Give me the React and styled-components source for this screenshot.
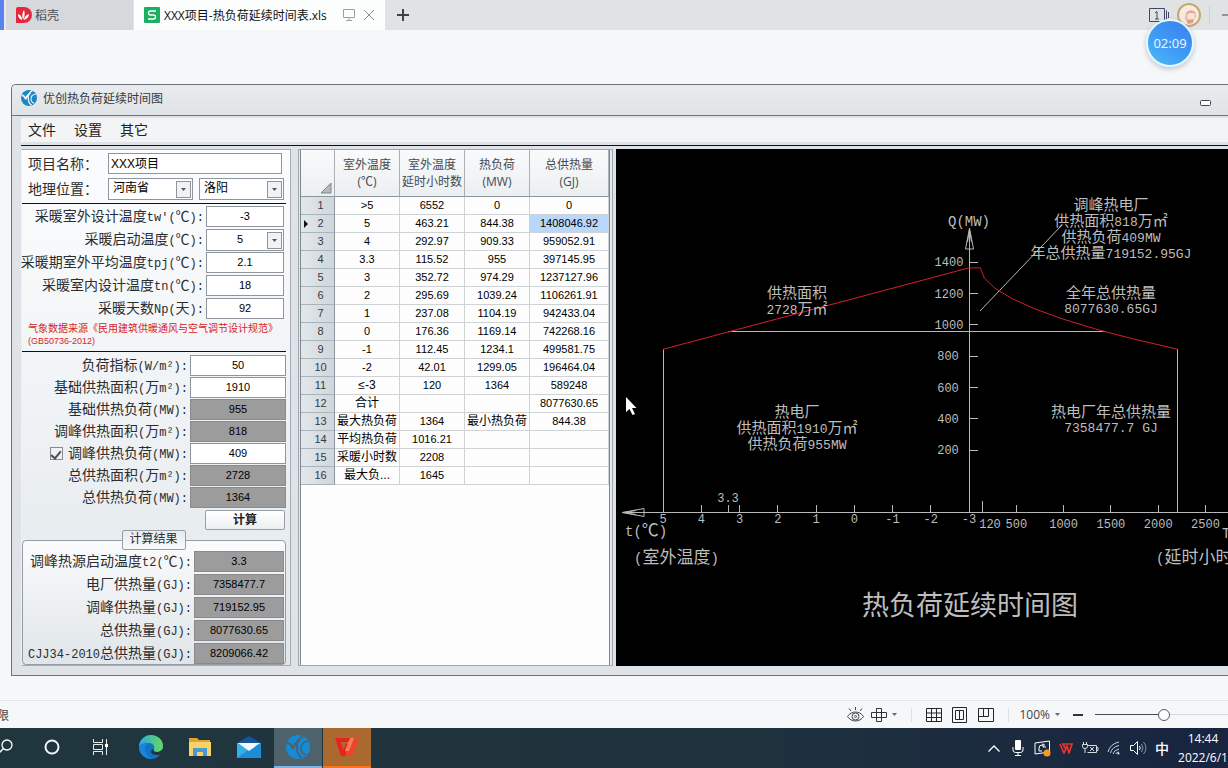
import React, { useEffect, useRef } from "react";
import styled, { createGlobalStyle } from "styled-components";

const GlobalStyle = createGlobalStyle`
  * {
    box-sizing: border-box;
  }
  body {
    margin: 0;
    background-color: #f5f7f9;
    font-family: "Open Sans", "Noto Sans CJK SC", sans-serif;
    font-size: 12px;
    color: #333;
  }
  button, input, select {
    font-family: inherit;
    margin: 0;
  }
`;

const Page = styled.div`
  position: relative;
  min-height: 100vh;
  display: flex;
  flex-direction: column;
  overflow: hidden;
`;

/* top tabs */
const TabBar = styled.header`
  display: flex;
  align-items: stretch;
  height: 30px;
  background-color: #dfe3e4;
`;
const Edge = styled.div`
  width: 6px;
  border-left: 4px solid #5b82ee;
  background-color: #e6e9ee;
`;
const Tab = styled.button`
  display: flex;
  align-items: center;
  gap: ${(p) => (p.$active ? "4px" : "3px")};
  width: ${(p) => (p.$active ? "251px" : "127px")};
  padding: 0 10px;
  margin-right: ${(p) => (p.$active ? "0" : "1px")};
  border: 0;
  background-color: ${(p) => (p.$active ? "#fcfdfd" : "#d6d8dc")};
  color: ${(p) => (p.$active ? "#111" : "#4a5058")};
  font-size: 12px;
  white-space: nowrap;
`;
const TabTools = styled.span`
  display: flex;
  gap: 8px;
  margin-left: auto;
`;
const NewTab = styled.button`
  width: 36px;
  display: grid;
  place-items: center;
  border: 0;
  background: none;
`;
const TabRight = styled.div`
  display: flex;
  align-items: center;
  gap: 7px;
  margin-left: auto;
`;
const Separator = styled.span`
  width: 1px;
  height: 18px;
  background-color: #cbd0d3;
`;
const Timer = styled.div`
  position: absolute;
  top: 19px;
  right: 34px;
  width: 48px;
  height: 48px;
  display: grid;
  place-items: center;
  border: 2px solid #e0f8fc;
  border-radius: 50%;
  background: linear-gradient(215deg, #3b7ff0, #3f9bf3 55%, #4cbcf8);
  box-shadow: 0 2px 5px rgba(60, 80, 110, 0.3);
  color: #e6f4ff;
  font-family: "Noto Sans", sans-serif;
  font-size: 13px;
`;

/* application window */
const Workspace = styled.main`
  flex: 1;
  padding: 54px 0 24px 11px;
`;
const Window = styled.section`
  border: 1px solid #6c737a;
  border-right: 0;
  border-top-left-radius: 5px;
  background-color: #dfe3e7;
  overflow: hidden;
`;
const TitleBar = styled.div`
  display: flex;
  align-items: center;
  gap: 6px;
  height: 31px;
  padding: 0 17px 4px 9px;
  border-bottom: 1px solid #6c737a;
  background: linear-gradient(#e9ecef, #dfe3e6);
  color: #333a42;
`;
const Minimize = styled.button`
  display: flex;
  padding: 0;
  margin: 10px 0 0 auto;
  border: 0;
  background: none;
`;
const MenuBar = styled.nav`
  display: flex;
  align-items: center;
  gap: 18px;
  height: 24px;
  margin: 2px 0 3px 9px;
  padding-left: 7px;
  background-color: #f3f4f5;
`;
const MenuItem = styled.button`
  padding: 0;
  border: 0;
  background: none;
  color: #222;
  font-size: 14px;
  line-height: 20px;
`;
const Body = styled.div`
  display: grid;
  grid-template-columns: 270px 315px minmax(0, 1fr);
  column-gap: 7px;
  margin-left: 9px;
  padding: 3px 0 9px;
  border-top: 1px solid #111;

  & > :last-child {
    margin-left: -4px;
  }
`;

/* input panel */
const Panel = styled.form`
  border: 1px solid #a4abb3;
  border-left-color: #eef1f3;
  padding: 3px 4px 0 0;
  background: linear-gradient(#fbfcfd, #f1f4f6 45%, #e0e6ea);
  color: #2a2d31;
`;
const ProjectRow = styled.div`
  display: flex;
  align-items: center;
  gap: 6px;
  margin-bottom: ${(p) => p.$bottom}px;
  padding-left: 6px;
`;
const ProjectLabel = styled.label`
  flex: none;
  width: 74px;
  font-size: 14px;
  line-height: 20px;
  white-space: nowrap;
`;
const Rule = styled.hr`
  height: 1px;
  margin: 0;
  border: 0;
  background-color: #111;
`;
const Group = styled.div`
  display: flex;
  flex-direction: column;
  gap: ${(p) => p.$gap}px;
  padding: ${(p) => p.$pad};
`;
const Field = styled.div`
  display: flex;
  align-items: center;
  justify-content: flex-end;
  height: 21px;
`;
const FieldLabel = styled.label`
  padding-right: 2px;
  font-size: 14px;
  line-height: 20px;
  white-space: nowrap;
`;
const Half = styled.span`
  font-family: "Liberation Mono", monospace;
  font-size: 12px;
`;
const TextBox = styled.input`
  flex: none;
  width: ${(p) => p.$width}px;
  height: 21px;
  padding: 0 2px 2px;
  border: 1px solid #8f959c;
  border-color: ${(p) => (p.readOnly ? "#8a8a8c" : "#8f959c")};
  background-color: ${(p) => (p.readOnly ? "#9c9c9c" : "#fff")};
  color: #000;
  font-family: "Liberation Sans", "Noto Sans CJK SC", sans-serif;
  font-size: ${(p) => (p.$left ? "12px" : "11px")};
  text-align: ${(p) => (p.$left ? "left" : "center")};
  outline: none;
`;
const SelectWrap = styled.span`
  position: relative;
  flex: none;
  width: ${(p) => p.$width}px;
  height: 22px;
`;
const SelectBox = styled.select`
  appearance: none;
  width: 100%;
  height: 100%;
  padding: 0 14px 2px 4px;
  border: 1px solid #8f959c;
  border-radius: 0;
  background-color: #fff;
  color: #000;
  font-family: "Liberation Sans", "Noto Sans CJK SC", sans-serif;
  font-size: ${(p) => (p.$center ? "11px" : "12px")};
  text-align: ${(p) => (p.$center ? "center" : "left")};
`;
const Arrow = styled.span`
  position: absolute;
  top: 3px;
  right: 2px;
  width: 15px;
  height: 17px;
  display: grid;
  place-items: center;
  border: 1px solid #8f959c;
  background-color: #f0f2f4;
  pointer-events: none;
`;
const Note = styled.p`
  margin: 0;
  padding: 4px 0 4px 6px;
  color: #d9222a;
  font-family: "Liberation Sans", "Noto Sans CJK SC", sans-serif;
  font-size: 10px;
  line-height: 12px;
  white-space: nowrap;
`;
const NoteCode = styled.span`
  display: block;
  font-size: 9px;
`;
const CheckBox = styled.input`
  appearance: none;
  display: grid;
  place-items: center;
  width: 13px;
  height: 13px;
  margin-right: 5px;
  border: 1px solid #868c94;
  background-color: #eef0f2;

  &:checked::after {
    content: "";
    width: 4px;
    height: 8px;
    border: solid #4a4e55;
    border-width: 0 2px 2px 0;
    transform: rotate(40deg);
  }
`;
const CalcButton = styled.button`
  display: block;
  width: 80px;
  height: 20px;
  margin: 2px 1px 0 auto;
  padding: 0;
  border: 1px solid #989fa7;
  border-radius: 2px;
  background: linear-gradient(#fff, #eceff1);
  color: #222;
  font-size: 12px;
  font-weight: bold;
  line-height: 16px;
`;
const Results = styled.fieldset`
  min-width: 0;
  margin: 0;
  padding: 1px 1px 0 0;
  border: 1px solid #959ca5;
  border-radius: 4px;
  background: linear-gradient(#fafbfc, #dfe5e9);
`;
const ResultsTitle = styled.legend`
  width: 64px;
  height: 20px;
  margin: 0 auto;
  padding: 0;
  border: 1px solid #959ca5;
  border-radius: 2px;
  background: linear-gradient(#e8ecef, #f7f9fa);
  font-size: 12px;
  line-height: 15px;
  text-align: center;
`;

/* table */
const SheetPanel = styled.div`
  padding: 0 2px 0 1px;
  border: 1px solid #a0a7b0;
  background-color: #e6e9ed;
`;
const SheetInner = styled.div`
  height: 100%;
  border: solid #7e8890;
  border-width: 0 1px;
  background-color: #fdfdfd;
`;
const Sheet = styled.table`
  width: 100%;
  table-layout: fixed;
  border-collapse: separate;
  border-spacing: 0;
  text-align: center;
`;
const Column = styled.col`
  width: ${(p) => p.$width};
`;
const HeadCell = styled.th`
  height: 47px;
  padding: 0;
  border-right: 1px solid #a9b0b7;
  border-bottom: 1px solid #8d949b;
  background: linear-gradient(#f9fafb, #eceff1);
  color: #444b52;
  font-weight: normal;
  font-size: 12px;
  line-height: 17px;
  white-space: pre;
  vertical-align: middle;
`;
const CornerCell = styled(HeadCell)`
  vertical-align: bottom;
  text-align: right;
  line-height: 0;
  padding: 0 2px 2px 0;
`;
const RowHead = styled.th`
  position: relative;
  height: 18px;
  padding: 0 0 0 6px;
  border-right: 1px solid #8d949b;
  border-bottom: 1px solid #a9b3ba;
  background: linear-gradient(90deg, #e2e7ea, #cfd7dc);
  color: #333a42;
  font-family: "Liberation Sans", sans-serif;
  font-size: 11px;
  font-weight: normal;
  line-height: 15px;
`;
const Marker = styled.svg`
  position: absolute;
  top: 5px;
  left: 3px;
`;
const Cell = styled.td`
  height: 18px;
  padding: 0;
  border-right: 1px solid #d0d3d6;
  border-bottom: 1px solid #d0d3d6;
  background-color: ${(p) => (p.$selected ? "#b9d6fb" : "transparent")};
  color: #000;
  font-family: "Liberation Sans", "Noto Sans CJK SC", sans-serif;
  font-size: ${(p) => (p.$wide ? "12px" : "11px")};
  line-height: 15px;
  white-space: nowrap;
`;

/* chart */
const Chart = styled.svg`
  display: block;
  width: calc(100% + 4px);
  height: 517px;
  background-color: #000;
  fill: #bdbdbd;
  font-family: "Noto Sans CJK SC", sans-serif;
`;
const ChartHalf = styled.tspan`
  font-family: "Liberation Mono", monospace;
  font-size: ${(p) => p.$size}px;
`;

/* bottom bars */
const StatusBar = styled.footer`
  display: flex;
  align-items: center;
  height: 28px;
  border-top: 1px solid #e1e4e8;
  background-color: #f6f7f9;
  color: #3d434b;
  overflow: hidden;
`;
const Clipped = styled.span`
  margin-left: -3px;
`;
const StatusTools = styled.div`
  display: flex;
  flex: none;
  align-items: center;
  margin-left: auto;
  margin-right: -5px;
`;
const StatusButton = styled.button`
  display: flex;
  align-items: center;
  gap: 5px;
  margin-right: ${(p) => p.$after}px;
  padding: 0;
  border: 0;
  background: none;
  color: inherit;
  font-size: 12px;
`;
const StatusLine = styled.span`
  width: 1px;
  height: 14px;
  margin-right: ${(p) => p.$after}px;
  background-color: #dcdfe3;
`;
const Zoom = styled.input`
  appearance: none;
  width: 138px;
  height: 14px;
  background: linear-gradient(90deg, #454b52 50%, #d5d8dc 50%) center / 100% 1px no-repeat;

  &::-webkit-slider-thumb {
    appearance: none;
    width: 12px;
    height: 12px;
    border: 1px solid #555b62;
    border-radius: 50%;
    background-color: #fff;
  }
`;
const TaskBar = styled.div`
  display: flex;
  height: 40px;
  background: linear-gradient(90deg, #20363d, #1f323d 60%, #182440);
  color: #fff;
`;
const TaskButton = styled.button`
  display: grid;
  place-items: center;
  width: ${(p) => p.$width || 48}px;
  margin-right: ${(p) => p.$after ?? 1}px;
  padding: 0;
  border: 0;
  border-bottom: 2px solid ${(p) => p.$line || "transparent"};
  background-color: ${(p) => p.$fill || "transparent"};
  color: #fff;
  overflow: hidden;
`;
const Tray = styled.div`
  display: flex;
  align-items: center;
  margin-left: auto;
`;
const TrayButton = styled.button`
  display: grid;
  place-items: center;
  width: 24px;
  height: 40px;
  padding: 0;
  border: 0;
  background: none;
  color: #fff;
  font-size: 14px;
  font-weight: 500;
`;
const Clock = styled.div`
  width: 54px;
  padding-left: 4px;
  font-size: 12px;
  line-height: 19px;
  text-align: center;
  white-space: nowrap;
`;

const HALF = /([\x20-\x7e²]+)/;

/* full-width and half-width runs are set in different faces */
const Mixed = ({ text }) =>
  text.split(HALF).map((part, i) => (i % 2 ? <Half key={i}>{part}</Half> : part));

const climate = [
  { id: "tw", label: "采暖室外设计温度tw'(℃):", value: "-3" },
  { id: "start", label: "采暖启动温度(℃):", value: "5", select: true },
  { id: "tpj", label: "采暖期室外平均温度tpj(℃):", value: "2.1" },
  { id: "tn", label: "采暖室内设计温度tn(℃):", value: "18" },
  { id: "np", label: "采暖天数Np(天):", value: "92" },
];

const loads = [
  { id: "index", label: "负荷指标(W/m²):", value: "50" },
  { id: "baseArea", label: "基础供热面积(万m²):", value: "1910" },
  { id: "baseLoad", label: "基础供热负荷(MW):", value: "955", locked: true },
  { id: "peakArea", label: "调峰供热面积(万m²):", value: "818", locked: true },
  { id: "peakLoad", label: "调峰供热负荷(MW):", value: "409", check: true },
  { id: "totalArea", label: "总供热面积(万m²):", value: "2728", locked: true },
  { id: "totalLoad", label: "总供热负荷(MW):", value: "1364", locked: true },
];

const results = [
  { id: "t2", label: "调峰热源启动温度t2(℃):", value: "3.3" },
  { id: "plant", label: "电厂供热量(GJ):", value: "7358477.7" },
  { id: "peak", label: "调峰供热量(GJ):", value: "719152.95" },
  { id: "total", label: "总供热量(GJ):", value: "8077630.65" },
  { id: "cjj", label: "CJJ34-2010总供热量(GJ):", value: "8209066.42" },
];

const rows = [
  [">5", "6552", "0", "0"],
  ["5", "463.21", "844.38", "1408046.92"],
  ["4", "292.97", "909.33", "959052.91"],
  ["3.3", "115.52", "955", "397145.95"],
  ["3", "352.72", "974.29", "1237127.96"],
  ["2", "295.69", "1039.24", "1106261.91"],
  ["1", "237.08", "1104.19", "942433.04"],
  ["0", "176.36", "1169.14", "742268.16"],
  ["-1", "112.45", "1234.1", "499581.75"],
  ["-2", "42.01", "1299.05", "196464.04"],
  ["≤-3", "120", "1364", "589248"],
  ["合计", "", "", "8077630.65"],
  ["最大热负荷", "1364", "最小热负荷", "844.38"],
  ["平均热负荷", "1016.21", "", ""],
  ["采暖小时数", "2208", "", ""],
  ["最大负...", "1645", "", ""],
];

const ArrowDown = () => (
  <Arrow>
    <svg width="5" height="3">
      <path d="M0 0h5L2.500 3z" fill="#555" />
    </svg>
  </Arrow>
);

const AppLogo = ({ size, color, mark }) => (
  <svg width={size} height={size} viewBox="0 0 24 24">
    <circle cx="12" cy="12" r="12" fill={color} />
    <path d="M1 8c3 0 5 2 6 6 1-4 3-7 7-9" fill="none" stroke={mark} strokeWidth="2.400" />
    <path d="M17 1c-5 3-7 7-6 12 0 4 2 8 5 10" fill="none" stroke={mark} strokeWidth="2" />
    <path d="M22 6c-5 1-7 4-7 7 0 4 2 6 5 7" fill="none" stroke={mark} strokeWidth="1.600" />
  </svg>
);

const Inputs = () => {
  const first = useRef(null);

  useEffect(() => {
    first.current.focus();
    first.current.setSelectionRange(2, 2);
  }, []);

  return (
    <Panel onSubmit={(e) => e.preventDefault()}>
      <ProjectRow $bottom={4}>
        <ProjectLabel htmlFor="project">项目名称：</ProjectLabel>
        <TextBox id="project" $width={174} $left defaultValue="XXX项目" />
      </ProjectRow>
      <ProjectRow $bottom={3}>
        <ProjectLabel htmlFor="province">地理位置：</ProjectLabel>
        <SelectWrap $width={85}>
          <SelectBox id="province" defaultValue="河南省">
            <option>河南省</option>
          </SelectBox>
          <ArrowDown />
        </SelectWrap>
        <SelectWrap $width={85}>
          <SelectBox aria-label="城市" defaultValue="洛阳">
            <option>洛阳</option>
          </SelectBox>
          <ArrowDown />
        </SelectWrap>
      </ProjectRow>
      <Rule />
      <Group $gap={2} $pad="2px 2px 0 0">
        {climate.map((f) => (
          <Field key={f.id}>
            <FieldLabel htmlFor={f.id}>
              <Mixed text={f.label} />
            </FieldLabel>
            {f.select ? (
              <SelectWrap $width={78}>
                <SelectBox id={f.id} $center defaultValue={f.value}>
                  <option>{f.value}</option>
                </SelectBox>
                <ArrowDown />
              </SelectWrap>
            ) : (
              <TextBox id={f.id} ref={f.id === "tw" ? first : null} $width={78} defaultValue={f.value} />
            )}
          </Field>
        ))}
      </Group>
      <Note>
        气象数据来源《民用建筑供暖通风与空气调节设计规范》
        <NoteCode>(GB50736-2012)</NoteCode>
      </Note>
      <Rule />
      <Group $gap={1} $pad="3px 0 0">
        {loads.map((f) => (
          <Field key={f.id}>
            {f.check && <CheckBox type="checkbox" defaultChecked aria-label="调峰供热负荷" />}
            <FieldLabel htmlFor={f.id}>
              <Mixed text={f.label} />
            </FieldLabel>
            <TextBox id={f.id} $width={96} readOnly={f.locked} defaultValue={f.value} />
          </Field>
        ))}
      </Group>
      <CalcButton>计算</CalcButton>
      <Results>
        <ResultsTitle>计算结果</ResultsTitle>
        <Group $gap={2} $pad="0">
          {results.map((f) => (
            <Field key={f.id}>
              <FieldLabel htmlFor={f.id}>
                <Mixed text={f.label} />
              </FieldLabel>
              <TextBox id={f.id} $width={90} readOnly defaultValue={f.value} />
            </Field>
          ))}
        </Group>
      </Results>
    </Panel>
  );
};

const DataSheet = () => (
  <SheetPanel>
    <SheetInner>
      <Sheet>
        <colgroup>
          <Column $width="34px" />
          <Column $width="65px" />
          <Column $width="65px" />
          <Column $width="65px" />
          <Column $width="auto" />
        </colgroup>
        <thead>
          <tr>
            <CornerCell aria-label="全选">
              <svg width="12" height="12">
                <path d="M11 1v10H1z" fill="#b4bac0" stroke="#7f868d" />
              </svg>
            </CornerCell>
            <HeadCell>{"室外温度\n(℃)"}</HeadCell>
            <HeadCell>{"室外温度\n延时小时数"}</HeadCell>
            <HeadCell>{"热负荷\n(MW)"}</HeadCell>
            <HeadCell>{"总供热量\n(GJ)"}</HeadCell>
          </tr>
        </thead>
        <tbody>
          {rows.map((row, r) => (
            <tr key={r}>
              <RowHead>
                {r === 1 && (
                  <Marker width="4" height="8">
                    <path d="M0 0l4 4-4 4z" fill="#111" />
                  </Marker>
                )}
                {r + 1}
              </RowHead>
              {row.map((value, c) => (
                <Cell key={c} $selected={r === 1 && c === 3} $wide={/[^\x20-\x7e]/.test(value)}>
                  {value}
                </Cell>
              ))}
            </tr>
          ))}
        </tbody>
      </Sheet>
    </SheetInner>
  </SheetPanel>
);

const AXIS_X = 353;
const AXIS_Y = 363;
const tempX = (t) => 47 + (5 - t) * 38.25;
const hourX = (h) => AXIS_X + h * 0.0946;
const loadY = (q) => 332.6 - q * 0.1567;

/* running total of hours from the coldest row up */
const series = rows.slice(1, 11).reverse();
let hours = 0;
const curve = series.map(([, h, q]) => {
  hours += Number(h);
  return `${hourX(hours)},${loadY(Number(q))}`;
});
const redLine = [`${tempX(5)},${loadY(844.38)}`, `${AXIS_X},${loadY(1364)}`, ...curve].join(" ");

const Label = ({ x, y, size = 15, half = 13, anchor = "middle", children }) => (
  <text x={x} y={y} fontSize={size} textAnchor={anchor}>
    {children.split(HALF).map((part, i) =>
      i % 2 ? (
        <ChartHalf key={i} $size={half}>
          {part}
        </ChartHalf>
      ) : (
        part
      )
    )}
  </text>
);

const LoadChart = () => (
  <Chart role="img" aria-label="热负荷延续时间图">
    <g stroke="#b8b8b8" fill="none" shapeRendering="crispEdges">
      <path d={`M7 ${AXIS_Y + 0.5}H3000M${AXIS_X + 0.5} 80V${AXIS_Y}`} />
      <path d={`M47.5 ${loadY(844)}V${AXIS_Y}M561.5 ${loadY(844)}V${AXIS_Y}`} />
      <path d={`M${tempX(3.3)} 182.5H490`} />
      {[200, 400, 600, 800, 1000, 1200, 1400].map((q) => (
        <path key={q} d={`M${AXIS_X} ${loadY(q)}h9`} />
      ))}
      {[4, 3.3, 3, 2, 1, 0, -1, -2].map((t) => (
        <path key={t} d={`M${tempX(t)} ${AXIS_Y}v-7`} />
      ))}
      {[500, 1000, 1500, 2000, 2500].map((h) => (
        <path key={h} d={`M${hourX(h)} ${AXIS_Y}v-7`} />
      ))}
      <path d={`M366.5 ${AXIS_Y}v-11`} />
    </g>
    <g stroke="#b8b8b8" fill="none">
      <path d="M353.5 79l-4 21h8zM353.5 81l-2 12M353.5 81l2 12" />
      <path d="M6 363.5l22-4v8zM8 363.5l12-2M8 363.5l12 2" />
      <path d="M364 162L446 76" />
    </g>
    <polyline points={redLine} fill="none" stroke="#d4202c" />

    <Label x={353} y={77} size={17} half={14}>Q(MW)</Label>
    {[200, 400, 600, 800, 1000, 1200, 1400].map((q) => (
      <Label key={q} x={q < 1000 ? 332 : 333} y={loadY(q) + 4} half={12}>{String(q)}</Label>
    ))}
    {[5, 4, 3, 2, 1, 0, -1, -2, -3].map((t) => (
      <Label key={t} x={tempX(t)} y={374} half={12}>{String(t)}</Label>
    ))}
    <Label x={112} y={353} half={12}>3.3</Label>
    <Label x={374} y={379} half={12}>120</Label>
    {[500, 1000, 1500, 2000, 2500].map((h) => (
      <Label key={h} x={hourX(h)} y={379} half={12}>{String(h)}</Label>
    ))}

    <Label x={181} y={149}>供热面积</Label>
    <Label x={181} y={165}>2728万㎡</Label>
    <Label x={181} y={268}>热电厂</Label>
    <Label x={181} y={284}>供热面积1910万㎡</Label>
    <Label x={181} y={300}>供热负荷955MW</Label>

    <Label x={495} y={61}>调峰热电厂</Label>
    <Label x={495} y={77}>供热面积818万㎡</Label>
    <Label x={495} y={93}>供热负荷409MW</Label>
    <Label x={495} y={109}>年总供热量719152.95GJ</Label>

    <Label x={495} y={149}>全年总供热量</Label>
    <Label x={495} y={164}>8077630.65GJ</Label>
    <Label x={495} y={268}>热电厂年总供热量</Label>
    <Label x={495} y={283}>7358477.7 GJ</Label>

    <Label x={9} y={387} size={17} half={14} anchor="start">t(℃)</Label>
    <Label x={18} y={414} size={17} half={14} anchor="start">(室外温度)</Label>
    <Label x={606} y={389} size={17} half={14} anchor="start">T(h)</Label>
    <Label x={540} y={414} size={17} half={14} anchor="start">(延时小时数)</Label>
    <Label x={354} y={466} size={27}>热负荷延续时间图</Label>

    <path d="M10 248v15l3.500-3 3 6 2.500-1-3-6h4.500z" fill="#fff" />
  </Chart>
);

const App = () => {
  return (
    <Page>
      <GlobalStyle />
      <TabBar>
        <Edge />
        <Tab>
          <svg width="16" height="16" viewBox="0 0 16 16">
            <path d="M2 0h6a8 8 0 0 1 0 16H0V2a2 2 0 0 1 2-2z" fill="#e5283c" />
            <path d="M7 13C6 9 6 6 8 3c1 3 1 6-1 10zM6 13C3 12 2 10 2 7c3 1 4 3 4 6zM8 13c0-3 2-5 5-6 0 3-2 5-5 6z" fill="#fff" />
          </svg>
          稻壳
        </Tab>
        <Tab $active>
          <svg width="16" height="16" viewBox="0 0 16 16">
            <rect width="16" height="16" rx="1" fill="#19b063" />
            <path d="M12 4H6.500Q4.500 4 4.500 6T6.500 8h3q2 0 2 2t-2 2H4" fill="none" stroke="#fff" strokeWidth="1.400" />
          </svg>
          XXX项目-热负荷延续时间表.xls
          <TabTools>
            <svg width="12" height="12" viewBox="0 0 12 12" fill="none" stroke="#9aa0a8">
              <path d="M.5.5h11v8H.5zM6 8.500v3M3 11.500h6" />
            </svg>
            <svg width="12" height="12" viewBox="0 0 12 12" fill="none" stroke="#8a9098">
              <path d="M1 1l10 10M11 1L1 11" />
            </svg>
          </TabTools>
        </Tab>
        <NewTab aria-label="新建">
          <svg width="12" height="12" stroke="#3c424c" strokeWidth="2">
            <path d="M6 0v12M0 6h12" />
          </svg>
        </NewTab>
        <TabRight>
          <svg width="20" height="14" fill="none" stroke="#3f4762">
            <path d="M.5.5h15v13H.5zM17.500 2.500v9M19.500 4v6M6 5l2-1.500V11M6 11h4" />
          </svg>
          <svg width="26" height="26" viewBox="0 0 26 26">
            <circle cx="13" cy="13" r="11" fill="#f6ebe2" stroke="#c7a672" strokeWidth="2" />
            <path d="M9 18c-1-6 2-10 6-10 4 0 6 4 5 8z" fill="#f0c3ae" />
            <circle cx="15" cy="14" r="3.500" fill="#fbe4d6" />
            <path d="M10 12c2-4 8-4 10 0-3-2-6-1-10 0zM10 18l8-1-1 4-5 1z" fill="#e39a88" />
          </svg>
          <Separator />
          <svg width="11" height="2">
            <path d="M5 1h6" stroke="#3f4762" strokeWidth="1" />
          </svg>
        </TabRight>
      </TabBar>
      <Timer>02:09</Timer>

      <Workspace>
        <Window>
          <TitleBar>
            <AppLogo size={16} color="#1c86c4" mark="#eef5f9" />
            优创热负荷延续时间图
            <Minimize aria-label="最小化">
              <svg width="11" height="6">
                <rect x=".5" y=".5" width="10" height="5" rx="1" fill="#fff" stroke="#3f4650" />
              </svg>
            </Minimize>
          </TitleBar>
          <MenuBar>
            <MenuItem>文件</MenuItem>
            <MenuItem>设置</MenuItem>
            <MenuItem>其它</MenuItem>
          </MenuBar>
          <Body>
            <Inputs />
            <DataSheet />
            <LoadChart />
          </Body>
        </Window>
      </Workspace>

      <StatusBar>
        <Clipped>限</Clipped>
        <StatusTools>
          <StatusButton $after={7} aria-label="护眼模式">
            <svg width="17" height="16" viewBox="0 0 17 16" fill="none" stroke="#3d434b">
              <path d="M.5 9.500c4-6 12-6 16 0-4 6-12 6-16 0zM8.500 0v3M2 1.500l2 2.500M15 1.500L13 4" />
              <circle cx="8.500" cy="9.500" r="3.500" />
              <circle cx="8.500" cy="9.500" r="1" />
            </svg>
          </StatusButton>
          <StatusButton $after={14} aria-label="阅读模式">
            <svg width="16" height="14" fill="none" stroke="#2f343c">
              <path d="M5.500.5h5v13h-5zM.5 4.500h15v5H.5z" />
            </svg>
            <svg width="5" height="3">
              <path d="M0 0h5L2.500 3z" fill="#666" />
            </svg>
          </StatusButton>
          <StatusLine $after={14} />
          <StatusButton $after={10} aria-label="普通视图">
            <svg width="16" height="14" fill="none" stroke="#20262e">
              <path d="M.5.5h15v13H.5zM.5 5h15M.5 9.500h15M5.500.5v13M10.500.5v13" />
            </svg>
          </StatusButton>
          <StatusButton $after={11} aria-label="分页预览">
            <svg width="15" height="16" fill="none" stroke="#20262e">
              <path d="M.5.5h14v15H.5zM3.500 3.500h8v9h-8zM7.500 3.500v9" />
            </svg>
          </StatusButton>
          <StatusButton $after={14} aria-label="页面布局">
            <svg width="16" height="14" fill="none" stroke="#20262e">
              <path d="M.5.5h15v13H.5zM.5 8.500h10v-8M5.500.5v8" />
            </svg>
          </StatusButton>
          <StatusLine $after={10} />
          <StatusButton $after={13}>
            100%
            <svg width="5" height="3">
              <path d="M0 0h5L2.500 3z" fill="#666" />
            </svg>
          </StatusButton>
          <StatusButton $after={12} aria-label="缩小">
            <svg width="10" height="2">
              <path d="M0 1h10" stroke="#2f343c" strokeWidth="2" />
            </svg>
          </StatusButton>
          <Zoom type="range" aria-label="缩放" defaultValue={50} />
        </StatusTools>
      </StatusBar>

      <TaskBar>
        <TaskButton $width={28} $after={0} aria-label="搜索">
          <svg width="28" height="18" fill="none" stroke="#fff" strokeWidth="1.300">
            <circle cx="7" cy="7" r="5" />
            <path d="M3.500 10.500L-2 16" />
          </svg>
        </TaskButton>
        <TaskButton $after={0} aria-label="Cortana">
          <svg width="18" height="18">
            <circle cx="9" cy="9" r="6.500" fill="none" stroke="#f2f4f5" strokeWidth="2" />
          </svg>
        </TaskButton>
        <TaskButton $after={3} aria-label="任务视图">
          <svg width="17" height="16" fill="none" stroke="#e8eced">
            <path d="M1.500 0v3.500h9V0M1.500 5.500h9v5h-9zM1.500 16v-3.500h9V16M14.500 0v16" />
            <path d="M13 5h3v3h-3z" fill="#fff" stroke="none" />
          </svg>
        </TaskButton>
        <TaskButton aria-label="Edge">
          <svg width="24" height="24" viewBox="0 0 24 24">
            <defs>
              <linearGradient id="edgeTop" x1="0" x2="1">
                <stop offset="0" stopColor="#2ba9e0" />
                <stop offset="1" stopColor="#68d85f" />
              </linearGradient>
            </defs>
            <circle cx="12" cy="12" r="12" fill="#1272c4" />
            <path d="M0 11C1 4 6 0 12 0c7 0 12 5 12 11 0 4-3 6-6 6-3 0-4-1-3-3 1-3-1-6-5-6S1 9 0 12z" fill="url(#edgeTop)" />
            <path d="M9 8c-5 3-4 12 4 16C5 24 0 18 0 12c1-3 5-5 9-4z" fill="#1a86d8" />
            <path d="M15 14c-1 2 0 3 3 3 2 0 4-1 6-3v4c-1 1-2 2-4 2-5 0-8-1-8-3 0-2 1-3 3-3z" fill="#20363d" />
          </svg>
        </TaskButton>
        <TaskButton aria-label="文件资源管理器">
          <svg width="22" height="19" viewBox="0 0 22 19">
            <path d="M0 0h8l2 2h11v4H0z" fill="#e2a32d" />
            <path d="M0 4h22v14H0z" fill="#fad368" />
            <path d="M4 18v-8h14v8h-4v-4H8v4z" fill="#4b98d2" />
          </svg>
        </TaskButton>
        <TaskButton aria-label="邮件">
          <svg width="24" height="22" viewBox="0 0 24 22">
            <path d="M0 7l12-7 12 7v4H0z" fill="#11559c" />
            <path d="M0 7h24v15H0z" fill="#35aeea" />
            <path d="M0 22L14 12l10-5v15z" fill="#1d8ed6" />
            <path d="M1 7h22l-11 8z" fill="#f5f8fa" />
          </svg>
        </TaskButton>
        <TaskButton $fill="#4f616a" $line="#7ab4ea" aria-label="优创热负荷延续时间图">
          <AppLogo size={24} color="#168bd5" mark="#4f616a" />
        </TaskButton>
        <TaskButton $fill="#a9692f" $line="#fb7417" aria-label="WPS">
          <svg width="24" height="18" viewBox="0 0 24 18">
            <path d="M0 0h15v4H5.500l3 8L11 6h4l-5 12H6z" fill="#e8231f" />
            <path d="M12 8l3 4 5-12h4l-7 18h-4l-3-5z" fill="#f4402c" />
            <path d="M10 13l5-13h4l-5 13z" fill="#ff7a55" />
          </svg>
        </TaskButton>
        <Tray>
          <TrayButton aria-label="显示隐藏的图标">
            <svg width="12" height="7" fill="none" stroke="#fff" strokeWidth="1.300">
              <path d="M.5 6.500L6 1l5.500 5.500" />
            </svg>
          </TrayButton>
          <TrayButton aria-label="麦克风">
            <svg width="12" height="16" fill="none" stroke="#fff">
              <rect x="3" y="0" width="6" height="10" rx="1" fill="#fff" stroke="none" />
              <path d="M1 7v3q0 2.500 2.500 2.500h5Q11 12.500 11 10V7M6 12v3M3 15.500h6" />
            </svg>
          </TrayButton>
          <TrayButton aria-label="更新">
            <svg width="17" height="17" fill="none" stroke="#fff">
              <path d="M1 3l14.500-2v11L1 14zM5 8q0-3 3-3h3M9 3.500v3.500h3M5 8v3h3" />
              <circle cx="13" cy="13" r="3.500" fill="#f59b1d" stroke="none" />
            </svg>
          </TrayButton>
          <TrayButton aria-label="WPS">
            <svg width="14" height="11" fill="none" stroke="#e8322d" strokeWidth="1.700">
              <path d="M1 1l4 9 3-7 2 7 3-9H4l2 4" />
            </svg>
          </TrayButton>
          <TrayButton aria-label="电池">
            <svg width="17" height="12" fill="none" stroke="#d6dade">
              <path d="M5.500 3.500h9v7h-9M14.500 5.500h1.500v3h-1.500M8 5l4 4M12 5L8 9M1.500 0v2M4.500 0v2M.5 2.500h5v2q0 2-2.500 2t-2.500-2zM3 7v4" />
            </svg>
          </TrayButton>
          <TrayButton aria-label="网络">
            <svg width="14" height="14" fill="none" stroke="#c9ced3">
              <path d="M1 11Q3 3 12 1M3.500 12Q5 6 12 4.500M6 13q1-4 6-5M9 13q.5-2 3-2" />
              <circle cx="11.500" cy="12.500" r="1" fill="#fff" stroke="none" />
            </svg>
          </TrayButton>
          <TrayButton aria-label="音量">
            <svg width="17" height="14" fill="none" stroke="#fff">
              <path d="M.5 4.500h3l4-4v13l-4-4h-3z" />
              <path d="M9.500 5q1.500 2 0 4" />
              <path d="M11.500 3q3 4 0 8M13.500 1q5 6 0 12" stroke="#8b929c" />
            </svg>
          </TrayButton>
          <TrayButton>中</TrayButton>
          <Clock>
            14:44
            <br />
            2022/6/1
          </Clock>
        </Tray>
      </TaskBar>
    </Page>
  );
};

export default App;
